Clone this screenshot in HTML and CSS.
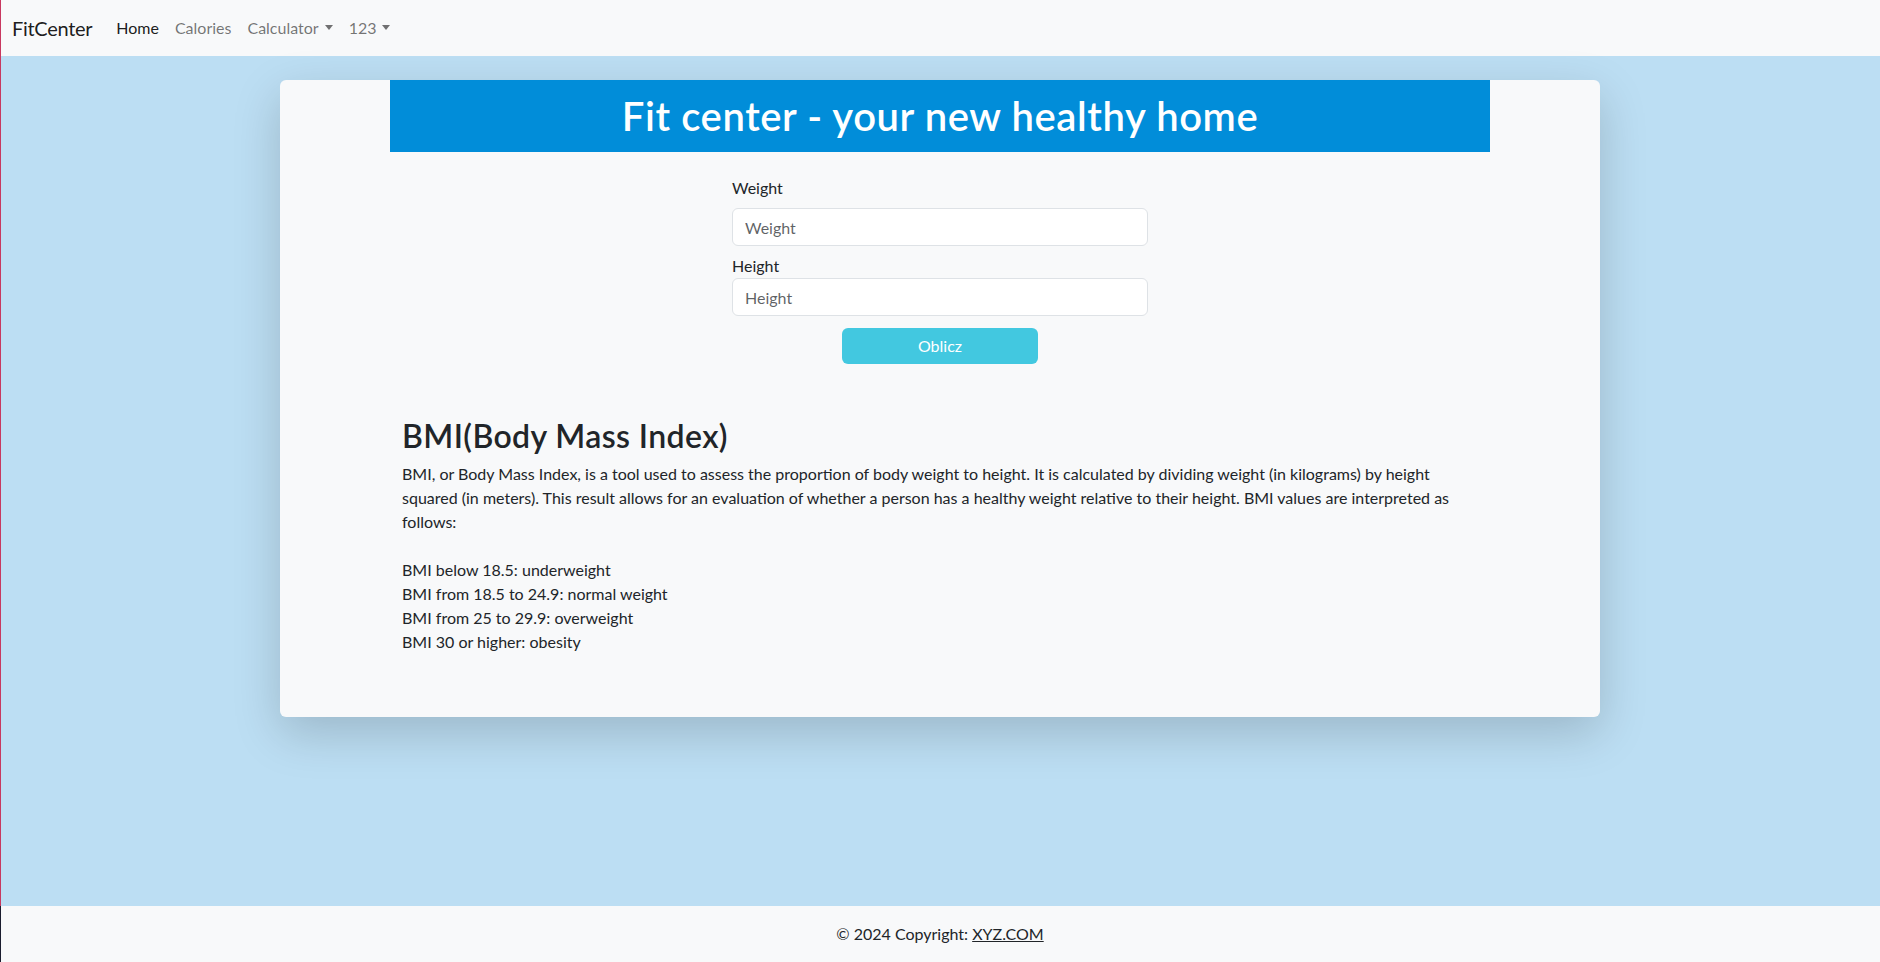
FILE: index.html
```html
<!DOCTYPE html>
<html lang="en">
<head>
<meta charset="utf-8">
<title>FitCenter</title>
<link rel="stylesheet" href="styles.css">
</head>
<body>
<nav class="navbar">
  <div class="nav-inner">
    <a class="brand" href="#">FitCenter</a>
    <ul class="nav-links">
      <li><a class="nav-link active" href="#">Home</a></li>
      <li><a class="nav-link" href="#">Calories</a></li>
      <li><a class="nav-link dropdown" href="#">Calculator</a></li>
      <li><a class="nav-link dropdown" href="#">123</a></li>
    </ul>
  </div>
</nav>
<main class="page">
  <div class="container">
    <div class="card">
      <div class="banner">
        <h1>Fit center - your new healthy home</h1>
      </div>
      <form class="bmi-form">
        <div class="group">
          <label class="form-label" for="weight">Weight</label>
          <input class="form-control" id="weight" type="text" placeholder="Weight">
        </div>
        <div class="group">
          <label class="plain-label" for="height">Height</label>
          <input class="form-control" id="height" type="text" placeholder="Height">
        </div>
        <div class="actions">
          <button class="btn" type="button">Oblicz</button>
        </div>
      </form>
      <section class="info">
        <h2>BMI(Body Mass Index)</h2>
        <p>BMI, or Body Mass Index, is a tool used to assess the proportion of body weight to height. It is calculated by dividing weight (in kilograms) by height squared (in meters). This result allows for an evaluation of whether a person has a healthy weight relative to their height. BMI values are interpreted as follows:<br><br>BMI below 18.5: underweight<br>BMI from 18.5 to 24.9: normal weight<br>BMI from 25 to 29.9: overweight<br>BMI 30 or higher: obesity</p>
      </section>
    </div>
  </div>
</main>
<footer class="footer">
  <span>© 2024 Copyright: <a href="#">XYZ.COM</a></span>
</footer>
</body>
</html>
```
FILE: styles.css
```css
* { box-sizing: border-box; }

body {
  margin: 0;
  min-height: 100vh;
  display: flex;
  flex-direction: column;
  font-family: Lato, "Noto Sans", sans-serif;
  font-size: 16px;
  line-height: 1.5;
  color: #212529;
  background: #bcdef3;
}

.navbar {
  height: 56px;
  flex: none;
  display: flex;
  align-items: center;
  background: #f8f9fa;
  box-shadow: inset 1px 0 0 #c8385f;
}

.nav-inner {
  display: flex;
  align-items: center;
  padding: 0 12px;
}

.brand {
  font-size: 20px;
  line-height: 30px;
  letter-spacing: -0.3px;
  margin-right: 16px;
  color: rgba(0, 0, 0, 0.9);
  text-decoration: none;
}

.nav-links {
  display: flex;
  list-style: none;
  margin: 0;
  padding: 0;
}

.nav-link {
  display: block;
  padding: 8px;
  line-height: 24px;
  color: rgba(0, 0, 0, 0.55);
  text-decoration: none;
}

.nav-link.active { color: rgba(0, 0, 0, 0.9); }

.nav-link.dropdown::after {
  content: "";
  display: inline-block;
  margin-left: 6px;
  vertical-align: 4px;
  border-top: 5px solid;
  border-left: 4px solid transparent;
  border-right: 4px solid transparent;
}

.page {
  flex: 1;
  padding-top: 24px;
  box-shadow: inset 1px 0 0 #c8385f;
}

.container {
  max-width: 1320px;
  margin: 0 auto;
}

.card {
  background: #f8f9fa;
  border-radius: 6px;
  box-shadow: 0 16px 48px rgba(0, 0, 0, 0.175);
  padding-bottom: 46px;
}

.banner {
  width: 1100px;
  margin: 0 auto;
  background: #018dd9;
  padding: 12px 0;
}

.banner h1 {
  margin: 0;
  color: #ffffff;
  text-align: center;
  font-size: 40px;
  font-weight: 600;
  line-height: 48px;
  letter-spacing: 0.6px;
}

.bmi-form {
  width: 440px;
  margin: 24px auto 0;
  padding: 0 12px;
}

.group { margin-bottom: 8px; }

.form-label {
  display: block;
  margin-bottom: 8px;
}

.plain-label { display: block; }

.form-control {
  display: block;
  width: 100%;
  height: 38px;
  padding: 6px 12px;
  font: inherit;
  color: #212529;
  background: #ffffff;
  border: 1px solid #dee2e6;
  border-radius: 6px;
}

.form-control::placeholder { color: rgba(33, 37, 41, 0.72); }

.actions {
  display: flex;
  justify-content: center;
  margin-top: 12px;
}

.btn {
  width: 196px;
  height: 36px;
  font: inherit;
  color: #ffffff;
  background: #42c8e0;
  border: 0;
  border-radius: 6px;
}

.info {
  width: 1100px;
  margin: 0 auto;
  padding: 53px 12px 0;
}

.info h2 {
  margin: 0 0 8px;
  font-size: 32px;
  font-weight: 600;
  line-height: 38px;
  letter-spacing: 0.4px;
}

.info p {
  margin: 0 0 16px;
  position: relative;
  top: -1px;
}

.footer {
  height: 56px;
  flex: none;
  display: flex;
  align-items: center;
  justify-content: center;
  background: #f8f9fa;
  line-height: 24px;
  box-shadow: inset 1px 0 0 #1b1d2e;
}

.footer a { color: #212529; }
```
